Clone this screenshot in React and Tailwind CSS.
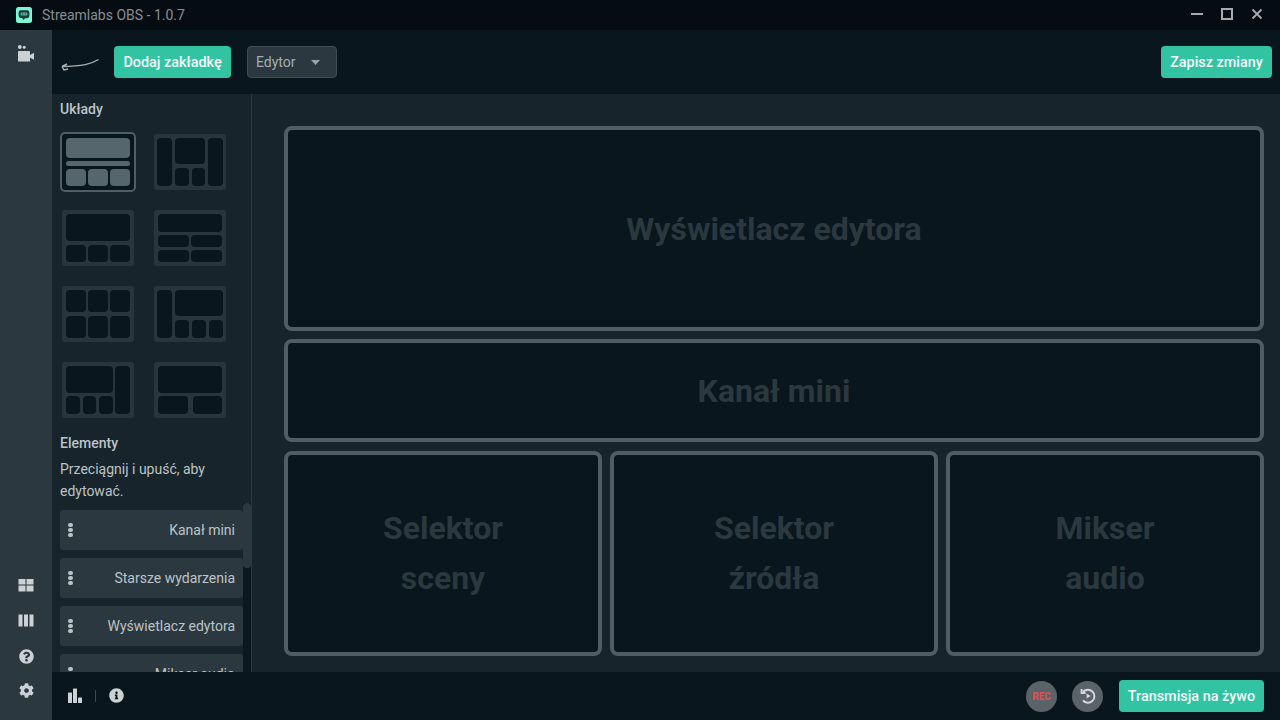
import { FaCog, FaInfoCircle, FaQuestionCircle } from "react-icons/fa";

const Cell = ({ className = "", active }) => (
  <div className={`rounded-[4px] ${active ? "bg-[#56666d]" : "bg-[#09161d]"} ${className}`} />
);

// the eight layout thumbnails, sizes read off the reference
const layouts = [
  (a) => (
    <div className="flex h-full flex-col gap-[3px]">
      <Cell active={a} className="h-[20px]" />
      <Cell active={a} className="h-[5px]" />
      <div className="flex flex-1 gap-[2px]">
        <Cell active={a} className="flex-1" />
        <Cell active={a} className="flex-1" />
        <Cell active={a} className="flex-1" />
      </div>
    </div>
  ),
  () => (
    <div className="flex h-full gap-[3px] -mx-[1px]">
      <Cell className="w-[15px]" />
      <div className="flex flex-1 flex-col gap-[4px]">
        <Cell className="h-[26px]" />
        <div className="flex flex-1 gap-[3px]">
          <Cell className="flex-1" />
          <Cell className="flex-1" />
        </div>
      </div>
      <Cell className="w-[15px]" />
    </div>
  ),
  () => (
    <div className="flex h-full flex-col gap-[4px]">
      <Cell className="h-[27px]" />
      <div className="flex flex-1 gap-[2px]">
        <Cell className="flex-1" />
        <Cell className="flex-1" />
        <Cell className="flex-1" />
      </div>
    </div>
  ),
  () => (
    <div className="flex h-full flex-col gap-[3px]">
      <Cell className="h-[18px]" />
      <div className="flex h-[12px] gap-[2px]">
        <Cell className="flex-1" />
        <Cell className="flex-1" />
      </div>
      <div className="flex flex-1 gap-[2px]">
        <Cell className="flex-1" />
        <Cell className="flex-1" />
      </div>
    </div>
  ),
  () => (
    <div className="grid h-full grid-cols-3 grid-rows-2 gap-x-[2px] gap-y-[4px]">
      <Cell />
      <Cell />
      <Cell />
      <Cell />
      <Cell />
      <Cell />
    </div>
  ),
  () => (
    <div className="flex h-full gap-[3px] -mx-[1px]">
      <Cell className="w-[15px]" />
      <div className="flex flex-1 flex-col gap-[4px]">
        <Cell className="h-[26px]" />
        <div className="flex flex-1 gap-[3px]">
          <Cell className="flex-1" />
          <Cell className="flex-1" />
          <Cell className="flex-1" />
        </div>
      </div>
    </div>
  ),
  () => (
    <div className="flex h-full gap-[2px]">
      <div className="flex flex-1 flex-col gap-[3px]">
        <Cell className="h-[27px]" />
        <div className="flex flex-1 gap-[3px]">
          <Cell className="flex-1" />
          <Cell className="flex-1" />
          <Cell className="flex-1" />
        </div>
      </div>
      <Cell className="w-[15px]" />
    </div>
  ),
  () => (
    <div className="flex h-full flex-col gap-[3px]">
      <Cell className="h-[27px]" />
      <div className="flex flex-1 gap-[5px]">
        <Cell className="flex-1" />
        <Cell className="flex-1" />
      </div>
    </div>
  ),
];

const Thumb = ({ index }) => {
  const active = index === 0;
  return (
    <div className="flex h-[60px] w-[76px] items-center justify-center">
      <div
        className={
          active
            ? "h-[60px] w-[76px] rounded-[5px] border-2 border-[#4f5e65] bg-[#09161d] px-[4px] py-[4px]"
            : "h-[56px] w-[72px] rounded-[3px] bg-[#28353d] px-[4px] py-[4px]"
        }
      >
        {layouts[index](active)}
      </div>
    </div>
  );
};

const Item = ({ label }) => (
  <div className="flex h-10 shrink-0 items-center justify-between rounded-[3px] bg-[#2b383f] pl-[8px] pr-2 text-sm text-[#bdc3c6]">
    <div className="flex flex-col gap-[1px]">
      <span className="h-[4px] w-[5px] rounded-full bg-[#bdc3c6]" />
      <span className="h-[4px] w-[5px] rounded-full bg-[#bdc3c6]" />
      <span className="h-[4px] w-[5px] rounded-full bg-[#bdc3c6]" />
    </div>
    <span>{label}</span>
  </div>
);

const Slot = ({ className = "", lines }) => (
  <div
    className={`flex flex-col items-center justify-center rounded-[8px] border-4 border-[#4f5e65] bg-[#09161d] text-[32px] leading-[50px] font-bold text-[#2b383f] ${className}`}
  >
    {lines.map((l) => (
      <span key={l}>{l}</span>
    ))}
  </div>
);

const TealButton = ({ children, className = "" }) => (
  <button className={`h-8 rounded-[4px] bg-[#31c3a2] pt-[1px] text-[14.4px] font-medium text-[#f4fbfa] ${className}`}>
    {children}
  </button>
);

export default function App() {
  return (
    <div className="flex h-screen w-screen flex-col overflow-hidden bg-[#17242c] font-['Roboto',sans-serif]">
      <div className="flex h-[30px] shrink-0 items-center bg-[#050d13] pl-4 pr-[17px]">
        <svg width="16" height="16" viewBox="0 0 16 16">
          <rect width="16" height="16" rx="2.5" fill="#80f5d2" />
          <path d="M5 3.2h6a2.4 2.4 0 0 1 2.4 2.4v3.2a2.4 2.4 0 0 1-2.4 2.4H9l-1.5 1.7L6 11H5a2.4 2.4 0 0 1-2.4-2.2V5.6A2.4 2.4 0 0 1 5 3.2z" fill="#1d3a3c" />
          <rect x="4.6" y="5.4" width="6.8" height="3" rx="1.2" fill="#5fb7a2" />
          <rect x="6" y="6.3" width="1.2" height="1.2" fill="#1d3a3c" />
          <rect x="8.8" y="6.3" width="1.2" height="1.2" fill="#1d3a3c" />
        </svg>
        <span className="ml-[10px] text-sm text-[#858e93]">Streamlabs OBS - 1.0.7</span>
        <div className="ml-auto -mt-[2px] flex items-center gap-[18px] text-[#a5adb1]">
          <svg width="12" height="12" viewBox="0 0 12 12">
            <rect y="5" width="12" height="2" fill="currentColor" />
          </svg>
          <svg width="12" height="12" viewBox="0 0 12 12">
            <rect x="1" y="1" width="10" height="10" fill="none" stroke="currentColor" strokeWidth="2" />
          </svg>
          <svg width="12" height="12" viewBox="0 0 12 12">
            <path d="M1.5 1.5l9 9M10.5 1.5l-9 9" stroke="currentColor" strokeWidth="1.8" />
          </svg>
        </div>
      </div>

      <div className="flex min-h-0 flex-1">
        <div className="flex w-[52px] shrink-0 flex-col items-center bg-[#2b383f] pt-[15px] pb-[21px] text-[#ccd1d3]">
          <svg width="18" height="18" viewBox="0 0 18 18" fill="currentColor">
            <circle cx="2.8" cy="2" r="1.9" />
            <circle cx="7.2" cy="2.2" r="1.5" />
            <rect x="1" y="6" width="12" height="10.5" rx="0.6" />
            <path d="M13 10l4-2.2v7L13 12.8z" />
          </svg>
          <div className="mt-auto flex flex-col items-center gap-[20px]">
            <svg width="16" height="16" viewBox="0 0 16 16" fill="currentColor">
              <rect x="0.5" y="2" width="7" height="5.5" />
              <rect x="8.5" y="2" width="7" height="5.5" />
              <rect x="0.5" y="8.5" width="7" height="6" />
              <rect x="8.5" y="8.5" width="7" height="6" />
            </svg>
            <svg width="16" height="16" viewBox="0 0 16 16" fill="currentColor">
              <rect x="0.5" y="1.5" width="4" height="12" />
              <rect x="6" y="1.5" width="4" height="12" />
              <rect x="11.5" y="1.5" width="4" height="12" />
            </svg>
            <FaQuestionCircle size={15} />
            <FaCog size={15} className="-translate-y-px" />
          </div>
        </div>

        <div className="flex min-w-0 flex-1 flex-col">
          <div className="flex h-[64px] shrink-0 items-center bg-[#09161d] pl-2 pr-2">
            <svg width="40" height="16" viewBox="0 0 40 16" fill="none" className="mt-[8px] mr-[14px]">
              <path d="M38.5 1.5C31 6 23 8.5 2 8.5M2 8.5l5-2.5M2 8.5l2 3.5 4-1" stroke="#a9b0b3" strokeWidth="1.4" />
            </svg>
            <TealButton className="w-[117px]">Dodaj zakładkę</TealButton>
            <div className="ml-4 flex h-8 w-[90px] items-center rounded-[4px] border border-[#3f4c53] bg-[#2b383f] pl-2 text-sm text-[#a5adb1]">
              Edytor
              <svg width="9" height="5" viewBox="0 0 9 5" className="ml-[15px]">
                <path d="M0 0h9L4.5 5z" fill="#9aa3a7" />
              </svg>
            </div>
            <TealButton className="ml-auto w-[111px]">Zapisz zmiany</TealButton>
          </div>

          <div className="flex min-h-0 flex-1">
            <div className="flex w-[200px] shrink-0 flex-col border-r border-[#2b383f] pl-2">
              <div className="mt-[6px] text-sm leading-[18px] font-medium text-[#bdc3c6]">Układy</div>
              <div className="mt-[14px] grid grid-cols-[92px_76px] gap-y-4">
                {layouts.map((_, i) => (
                  <Thumb key={i} index={i} />
                ))}
              </div>
              <div className="mt-[14px] text-sm leading-[18px] font-medium text-[#bdc3c6]">Elementy</div>
              <div className="mt-[6px] pr-4 text-sm leading-[22px] text-[#bdc3c6]">Przeciągnij i upuść, aby edytować.</div>
              <div className="mt-[1px] flex min-h-0 flex-1 overflow-hidden">
                <div className="flex w-[183px] flex-col gap-2 pt-[7px]">
                  <Item label="Kanał mini" />
                  <Item label="Starsze wydarzenia" />
                  <Item label="Wyświetlacz edytora" />
                  <Item label="Mikser audio" />
                </div>
                <div className="w-2 bg-[#0c1820]">
                  <div className="h-[65px] rounded-[4px] bg-[#2b383f]" />
                </div>
              </div>
            </div>

            <div className="flex min-w-0 flex-1 flex-col gap-[8px] pt-[32px] pr-[16px] pb-[16px] pl-[32px]">
              <Slot className="h-[205px]" lines={["Wyświetlacz edytora"]} />
              <Slot className="h-[103px]" lines={["Kanał mini"]} />
              <div className="flex h-[206px] gap-[8px] pt-[1px]">
                <Slot className="w-[318px] pb-[2px]" lines={["Selektor", "sceny"]} />
                <Slot className="w-[328px] pb-[2px]" lines={["Selektor", "źródła"]} />
                <Slot className="w-[318px] pb-[2px]" lines={["Mikser", "audio"]} />
              </div>
            </div>
          </div>

          <div className="flex h-12 shrink-0 items-center bg-[#09161d] pl-[15px] pr-4 text-[#ccd1d3]">
            <svg width="16" height="16" viewBox="0 0 16 16" fill="currentColor">
              <rect x="1" y="4.5" width="4" height="10.5" rx="0.5" />
              <rect x="6" y="0.5" width="4" height="14.5" rx="0.5" />
              <rect x="11" y="9.5" width="4" height="5.5" rx="0.5" />
            </svg>
            <span className="ml-[12px] h-3 w-px bg-[#3f4c53]" />
            <FaInfoCircle size={15} className="ml-[13px] -mt-[2px]" />
            <div className="ml-auto flex h-[31px] w-[31px] items-center justify-center rounded-full bg-[#5a6368] text-[10px] font-black text-[#d9534f]">
              REC
            </div>
            <div className="ml-[15px] flex h-[31px] w-[31px] items-center justify-center rounded-full bg-[#5a6368]">
              <svg width="18" height="18" viewBox="0 0 18 18" fill="none" stroke="#d3d7d9" strokeWidth="2">
                <path d="M4.2 4.8A6.5 6.5 0 1 1 4 13.5" />
                <path d="M2.6 2v4h4" />
                <path d="M7.6 6.4L11.8 9l-4.2 2.6z" fill="#d3d7d9" stroke="none" />
              </svg>
            </div>
            <TealButton className="ml-[16px] w-[145px]">Transmisja na żywo</TealButton>
          </div>
        </div>
      </div>
    </div>
  );
}
